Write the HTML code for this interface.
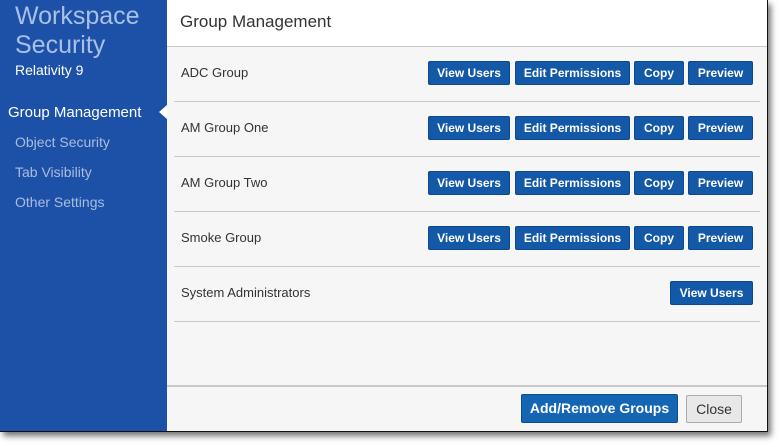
<!DOCTYPE html>
<html><head><meta charset="utf-8"><style>
*{margin:0;padding:0;box-sizing:border-box}
body{width:781px;height:447px;background:#fff;font-family:"Liberation Sans",sans-serif;position:relative;overflow:hidden}
#win{position:absolute;left:0;top:0;width:768px;height:432px;border:1px solid #111;border-left:none;border-top:none;background:#f6f6f6;box-shadow:3px 4px 6px rgba(0,0,0,.55)}
#side{position:absolute;left:0;top:0;width:167px;height:431px;background:#1d51a8}
.t{position:absolute;left:15px;color:#a9c0e6;font-size:25px;line-height:29px}
.nav{position:absolute;left:15px;color:#a8bde0;font-size:14px}
#hdr{position:absolute;left:167px;top:0;right:0;height:47px;background:#fff;border-bottom:1px solid #c8c8c8;font-size:17px;color:#333;padding:12px 0 0 13px}
.row{position:absolute;left:174px;width:586px;height:55px;border-bottom:1px solid #c8c8c8;font-size:13px;color:#333}
.row span{position:absolute;left:7px;top:18px}
.b{position:absolute;top:14px;height:24px;background:#1458a8;border:1px solid #0d4790;border-radius:2px;color:#fff;font-size:12px;font-weight:bold;text-align:center;line-height:22px}
#foot{position:absolute;left:167px;right:0;top:385px;border-top:2px solid #c8c8c8}
</style></head><body>
<div id="win">
<div id="side">
<div class="t" style="top:2px">Workspace</div>
<div class="t" style="top:31px">Security</div>
<div style="position:absolute;left:15px;top:62px;color:#fff;font-size:14px">Relativity 9</div>
<div style="position:absolute;left:8px;top:104px;color:#fff;font-size:15px">Group Management</div>
<div style="position:absolute;left:159px;top:105px;width:0;height:0;border-top:7px solid transparent;border-bottom:7px solid transparent;border-right:8px solid #fff"></div>
<div class="nav" style="top:134px">Object Security</div>
<div class="nav" style="top:164px">Tab Visibility</div>
<div class="nav" style="top:194px">Other Settings</div>
</div>
<div id="hdr">Group Management</div>
<div class="row" style="top:47px"><span>ADC Group</span><div class="b" style="left:254px;width:82px">View Users</div><div class="b" style="left:341px;width:115px">Edit Permissions</div><div class="b" style="left:460px;width:50px">Copy</div><div class="b" style="left:514px;width:65px">Preview</div></div>
<div class="row" style="top:102px"><span>AM Group One</span><div class="b" style="left:254px;width:82px">View Users</div><div class="b" style="left:341px;width:115px">Edit Permissions</div><div class="b" style="left:460px;width:50px">Copy</div><div class="b" style="left:514px;width:65px">Preview</div></div>
<div class="row" style="top:157px"><span>AM Group Two</span><div class="b" style="left:254px;width:82px">View Users</div><div class="b" style="left:341px;width:115px">Edit Permissions</div><div class="b" style="left:460px;width:50px">Copy</div><div class="b" style="left:514px;width:65px">Preview</div></div>
<div class="row" style="top:212px"><span>Smoke Group</span><div class="b" style="left:254px;width:82px">View Users</div><div class="b" style="left:341px;width:115px">Edit Permissions</div><div class="b" style="left:460px;width:50px">Copy</div><div class="b" style="left:514px;width:65px">Preview</div></div>
<div class="row" style="top:267px"><span>System Administrators</span><div class="b" style="left:496px;width:83px">View Users</div></div>
<div id="foot"></div>
<div style="position:absolute;left:521px;top:394px;width:157px;height:29px;background:#1565b5;border:1px solid #0d4c8f;border-radius:2px;color:#fff;font-size:14px;font-weight:bold;text-align:center;line-height:27px">Add/Remove Groups</div>
<div style="position:absolute;left:686px;top:395px;width:56px;height:28px;background:#e8e8e8;border:1px solid #aaa;border-radius:2px;color:#333;font-size:14px;text-align:center;line-height:26px">Close</div>
</div>
</body></html>
